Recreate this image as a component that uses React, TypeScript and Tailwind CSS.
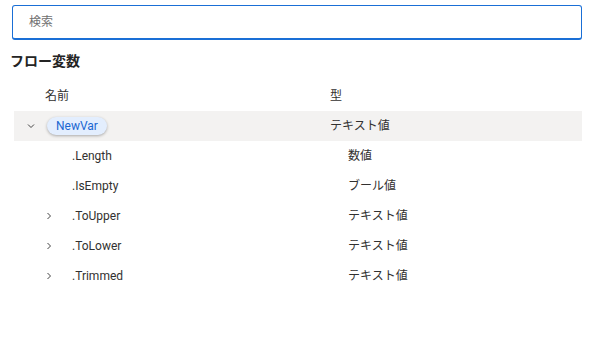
import React from 'react'

const font = { fontFamily: 'Roboto, "Noto Sans CJK JP", sans-serif' }

interface Child {
  name: string
  type: string
  expandable: boolean
}

const children: Child[] = [
  { name: '.Length', type: '数値', expandable: false },
  { name: '.IsEmpty', type: 'ブール値', expandable: false },
  { name: '.ToUpper', type: 'テキスト値', expandable: true },
  { name: '.ToLower', type: 'テキスト値', expandable: true },
  { name: '.Trimmed', type: 'テキスト値', expandable: true },
]

const ChevronDown = () => (
  <svg width="10" height="10" viewBox="0 0 10 10" fill="none">
    <path d="M2 3.5 L5 6.5 L8 3.5" stroke="#444" strokeWidth="1" />
  </svg>
)

const ChevronRight = () => (
  <svg width="10" height="10" viewBox="0 0 10 10" fill="none">
    <path d="M3.5 2 L6.5 5 L3.5 8" stroke="#444" strokeWidth="1" />
  </svg>
)

export default function App() {
  return (
    <div className="w-[610px] h-[357px] bg-white text-[#323130]" style={font}>
      <div className="pl-[12px] pr-[28px] pt-[5px]">
        <div className="h-[35px] border border-[#1a6fd6] border-b-2 rounded-[3px] flex items-center pl-[16px]">
          <span className="text-[12px] text-[#707070]">検索</span>
        </div>
      </div>
      <h2 className="pl-[10px] mt-[11px] text-[14px] font-bold text-[#242424] leading-[20px]">フロー変数</h2>
      <div className="pl-[14px] pr-[28px] mt-[10px] text-[12px]">
        <div className="flex items-center h-[30px]">
          <div className="w-[316px] pl-[31px]">名前</div>
          <div>型</div>
        </div>
        <div className="flex items-center h-[30px] bg-[#f3f2f1]">
          <div className="w-[316px] flex items-center">
            <span className="w-[32px] flex justify-center ml-[1px]"><ChevronDown /></span>
            <span className="px-[9px] h-[18px] flex items-center rounded-full bg-[#e3eefe] text-[#1a66d1] shadow-[0_1px_3px_rgba(0,0,0,0.3)]">NewVar</span>
          </div>
          <div>テキスト値</div>
        </div>
        {children.map((c) => (
          <div key={c.name} className="flex items-center h-[30px]">
            <div className="w-[334px] flex items-center">
              <span className="w-[30px] ml-[20px] flex justify-center">
                {c.expandable && <ChevronRight />}
              </span>
              <span className="ml-[8px]">{c.name}</span>
            </div>
            <div>{c.type}</div>
          </div>
        ))}
      </div>
    </div>
  )
}
